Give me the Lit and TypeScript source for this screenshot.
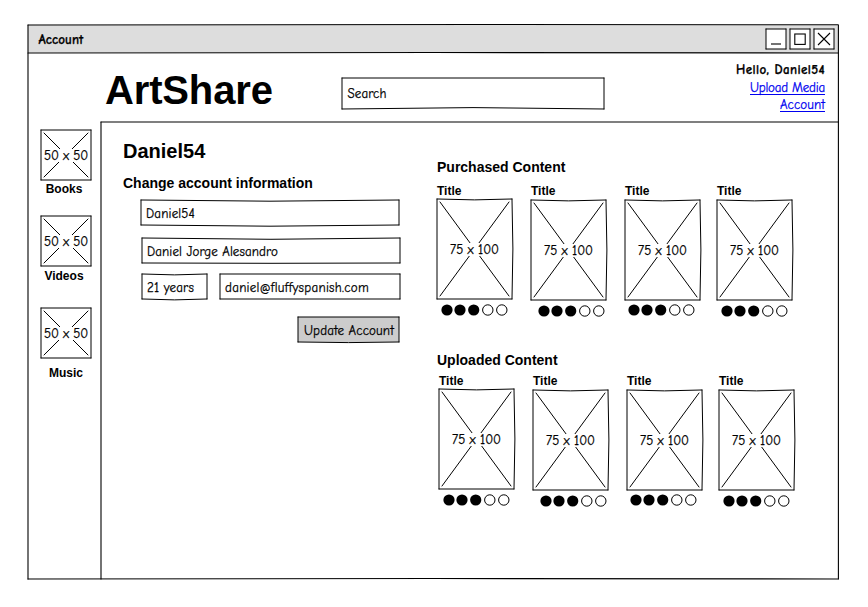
import { LitElement, html, css, svg } from "lit";
import { customElement, property } from "lit/decorators.js";
import { styleMap } from "lit/directives/style-map.js";

/** Rectangle outline made of four pen strokes; each edge can bow by a few tenths of a pixel. */
@customElement("sketch-frame")
class SketchFrame extends LitElement {
  @property({ type: Number }) w = 10;
  @property({ type: Number }) h = 10;
  @property({ type: Number }) top = 0;
  @property({ type: Number }) right = 0;
  @property({ type: Number }) bottom = 0;
  @property() fill = "#fff";
  @property({ type: Boolean }) cross = false;

  static styles = css`
    :host { position: absolute; inset: 0; display: block; pointer-events: none; }
    .art { display: block; overflow: visible; }
    .edge { fill: none; stroke: #000; stroke-width: 1; stroke-linecap: round; }
  `;

  render() {
    const { w, h } = this;
    const edges = [
      `M0 0Q${w / 2} ${this.top * 2} ${w} 0`,
      `M${w} 0Q${w + this.right * 2} ${h / 2} ${w} ${h}`,
      `M${w} ${h}Q${w / 2} ${h + this.bottom * 2} 0 ${h}`,
      `M0 ${h}V0`,
    ];
    if (this.cross) edges.push(`M3 3L${w - 3} ${h - 3}`, `M${w - 3} 3L3 ${h - 3}`);
    return html`<svg class="art" width=${w} height=${h}>
      <rect width=${w} height=${h} fill=${this.fill}></rect>
      ${edges.map((d) => svg`<path class="edge" d=${d}></path>`)}
    </svg>`;
  }
}

/** Handwritten-style text, tracked so that it fills the given width. */
@customElement("hand-text")
class HandText extends LitElement {
  @property() text = "";
  @property({ type: Number }) w = 0;

  static styles = css`
    :host {
      display: inline-block; position: relative; white-space: pre;
      font-family: "Comic Sans MS", "Comic Neue", Inter, sans-serif;
      font-size: 13px; font-feature-settings: "cv11" 1, "calt" 0;
      -webkit-text-stroke: var(--pen, 0.25px) currentColor;
    }
  `;

  render() {
    return html`<span>${this.text}</span>`;
  }

  updated() {
    const span = this.renderRoot.querySelector("span")!;
    span.style.letterSpacing = "0px";
    const natural = span.getBoundingClientRect().width;
    if (this.w) span.style.letterSpacing = `${(this.w - natural) / this.text.length}px`;
  }
}

@customElement("image-box")
class ImageBox extends LitElement {
  @property({ type: Number }) w = 50;
  @property({ type: Number }) h = 50;
  @property({ type: Number }) top = 0;
  @property({ type: Number }) right = 0;

  static styles = css`
    :host { display: block; }
    .box { position: relative; display: flex; align-items: center; justify-content: center; }
    .label { position: relative; background: #fff; line-height: 14px; height: 13px; }
  `;

  render() {
    return html`<div class="box" style=${styleMap({ width: `${this.w}px`, height: `${this.h}px` })}>
      <sketch-frame .w=${this.w} .h=${this.h} .top=${this.top} .right=${this.right} cross></sketch-frame>
      <hand-text class="label" text="${this.w} x ${this.h}" .w=${this.w > 50 ? 49 : 44}></hand-text>
    </div>`;
  }
}

@customElement("rating-dots")
class RatingDots extends LitElement {
  @property({ type: Number }) value = 3;

  static styles = css`
    :host { display: block; height: 12px; }
    .dots { display: block; overflow: visible; }
    .on { fill: #000; }
    .off { fill: #fff; stroke: #000; stroke-width: 1; }
  `;

  render() {
    return html`<svg class="dots" width="67" height="12">
      ${[0, 13, 26.7, 40.8, 54.8].map((x, i) =>
        i < this.value
          ? svg`<circle class="on" cx=${x + 6} cy="6" r="5.6"></circle>`
          : svg`<circle class="off" cx=${x + 6} cy="6" r="5.2"></circle>`
      )}
    </svg>`;
  }
}

const categories = [
  { name: "Books", before: 0, gap: 2, shift: -4 },
  { name: "Videos", before: 20, gap: 3, shift: -4 },
  { name: "Music", before: 25, gap: 8, shift: 0 },
];

const items = [
  { drop: 1, dots: 4, gap: 5 },
  { drop: 2, dots: 7, gap: 5 },
  { drop: 2, dots: 3, gap: 4 },
  { drop: 2, dots: 4, gap: 5 },
];

@customElement("app-root")
class AppRoot extends LitElement {
  static styles = css`
    :host {
      display: block; box-sizing: border-box; width: 868px; height: 607px;
      padding: 25px 0 0 28px; background: #fff; color: #000; overflow: hidden;
      font-family: "Liberation Sans", Arial, sans-serif;
    }
    .window { position: relative; width: 810px; height: 554px; }
    .lines { position: absolute; inset: 0; overflow: visible; }
    .stroke { fill: none; stroke: #000; stroke-width: 1.1; stroke-linecap: round; }
    .bar { position: relative; height: 28px; display: flex; justify-content: space-between; }
    .caption { margin: 7px 0 0 10.5px; line-height: 16px; font-weight: 700; --pen: 0.25px; }
    .controls { display: flex; gap: 4px; margin: 4px 4px 0 0; }
    .control { position: relative; width: 20px; height: 20px; }
    .glyph { position: relative; display: block; }
    .mark { fill: none; stroke: #000; stroke-width: 1.1; }
    .header { position: relative; height: 69px; display: grid; grid-template-columns: 237px 262px 1fr; padding-left: 77px; }
    h1, h2, h3, h4 { margin: 0; font-weight: 700; white-space: nowrap; }
    h1 { font-size: 40px; line-height: 44px; margin-top: 15px; letter-spacing: -0.15px; }
    .field { position: relative; box-sizing: border-box; height: 25px; padding-left: 5px; line-height: 25px; }
    .search { height: 31px; margin-top: 25px; padding-left: 5.5px; line-height: 30px; }
    .user { display: flex; flex-direction: column; align-items: flex-end; padding: 8px 13px 0 0; line-height: 17.5px; }
    .hello { font-weight: 700; --pen: 0.25px; }
    .link { color: #0000f0; text-decoration: none; height: 17.5px; display: block; position: relative; line-height: 16.5px; }
    .link::after { content: ""; position: absolute; left: 0; right: 0; bottom: 1.5px; height: 1px; background: #0000f0; }
    .body { position: relative; display: flex; height: 457px; }
    .side { width: 73px; box-sizing: border-box; padding: 8px 0 0 13px; }
    .cat { width: 50px; }
    .cat-name { font-size: 12px; line-height: 14px; font-weight: 700; text-align: center; }
    .account { width: 336px; box-sizing: border-box; padding: 17px 0 0 22px; }
    h2 { font-size: 20px; line-height: 24px; }
    h3 { font-size: 14px; line-height: 16px; }
    .sub { margin-top: 12px; }
    .form { width: 259px; margin: 9px 0 0 18px; }
    .first { width: 258px; }
    .second { width: 258px; margin: 13px 0 0 1px; }
    .row { display: flex; gap: 13px; margin: 11px 0 0 1px; }
    .age { width: 65px; }
    .mail { width: 180px; }
    .update {
      position: relative; display: block; width: 101px; height: 25px; margin: 18px 0 0 157px; padding: 1px 0 0 6px;
      border: 0; background: none; text-align: left; line-height: 26px; color: #000;
    }
    .content { padding-top: 37px; }
    .purchased { height: 193px; }
    .cards { display: grid; grid-template-columns: 94px 94px 92px 75px; margin-top: 9px; }
    .uploaded .cards { margin: 6px 0 0 2px; }
    h4 { font-size: 12px; line-height: 14px; }
  `;

  private cards() {
    return html`<div class="cards">
      ${items.map(
        (it) => html`<div>
          <h4>Title</h4>
          <image-box style=${styleMap({ marginTop: `${it.drop}px` })} .w=${75} .h=${100} .top=${0.9} .right=${0.9}></image-box>
          <rating-dots style=${styleMap({ margin: `${it.gap}px 0 0 ${it.dots}px` })}></rating-dots>
        </div>`
      )}
    </div>`;
  }

  render() {
    const controls = [
      svg`<path class="mark" d="M5 15H15"></path>`,
      svg`<rect class="mark" x="4.8" y="5" width="10.4" height="10.4"></rect>`,
      svg`<path class="mark" d="M4 4L16 16M16 4L4 16"></path>`,
    ];
    return html`<div class="window">
      <svg class="lines" width="810" height="554">
        <path fill="#ddd" d="M0 0H810V27.5H0Z"></path>
        <path class="stroke" d="M0 0Q405 -1 810 -.2"></path>
        <path class="stroke" d="M810.4 0V554"></path>
        <path class="stroke" d="M0 554Q405 553 810 554"></path>
        <path class="stroke" d="M0 0V554"></path>
        <path class="stroke" d="M0 28Q405 27 810 28"></path>
        <path class="stroke" d="M73 97Q440 96 810 97"></path>
        <path class="stroke" d="M73 97Q72 325 73 554"></path>
      </svg>
      <div class="bar">
        <hand-text class="caption" text="Account" .w=${45}></hand-text>
        <div class="controls">
          ${controls.map(
            (g) => html`<div class="control">
              <sketch-frame .w=${20} .h=${20}></sketch-frame>
              <svg class="glyph" width="20" height="20">${g}</svg>
            </div>`
          )}
        </div>
      </div>
      <div class="header">
        <h1>ArtShare</h1>
        <div class="field search">
          <sketch-frame .w=${262} .h=${31} .bottom=${-1.4}></sketch-frame>
          <hand-text text="Search" .w=${39}></hand-text>
        </div>
        <div class="user">
          <hand-text class="hello" text="Hello, Daniel54" .w=${89}></hand-text>
          <a class="link"><hand-text text="Upload Media" .w=${75}></hand-text></a>
          <a class="link"><hand-text text="Account" .w=${45}></hand-text></a>
        </div>
      </div>
      <div class="body">
        <div class="side">
          ${categories.map(
            (c) => html`<div class="cat" style=${styleMap({ marginTop: `${c.before}px` })}>
              <image-box></image-box>
              <div class="cat-name" style=${styleMap({ marginTop: `${c.gap}px`, marginRight: `${-c.shift}px` })}>${c.name}</div>
            </div>`
          )}
        </div>
        <div class="account">
          <h2>Daniel54</h2>
          <h3 class="sub">Change account information</h3>
          <div class="form">
            <div class="field first">
              <sketch-frame .w=${258} .h=${25} .top=${1.2} .bottom=${1.2}></sketch-frame>
              <hand-text text="Daniel54" .w=${49}></hand-text>
            </div>
            <div class="field second">
              <sketch-frame .w=${258} .h=${25} .top=${1.3} .bottom=${0.3}></sketch-frame>
              <hand-text text="Daniel Jorge Alesandro" .w=${131}></hand-text>
            </div>
            <div class="row">
              <div class="field age">
                <sketch-frame .w=${65} .h=${25} .top=${0.9} .bottom=${0.9}></sketch-frame>
                <hand-text text="21 years" .w=${47}></hand-text>
              </div>
              <div class="field mail">
                <sketch-frame .w=${180} .h=${25}></sketch-frame>
                <hand-text text="daniel@fluffyspanish.com" .w=${144}></hand-text>
              </div>
            </div>
            <button class="update">
              <sketch-frame .w=${101} .h=${25} .bottom=${0.6} fill="#ccc"></sketch-frame>
              <hand-text text="Update Account" .w=${90}></hand-text>
            </button>
          </div>
        </div>
        <div class="content">
          <section class="purchased">
            <h3>Purchased Content</h3>
            ${this.cards()}
          </section>
          <section class="uploaded">
            <h3>Uploaded Content</h3>
            ${this.cards()}
          </section>
        </div>
      </div>
    </div>`;
  }
}
